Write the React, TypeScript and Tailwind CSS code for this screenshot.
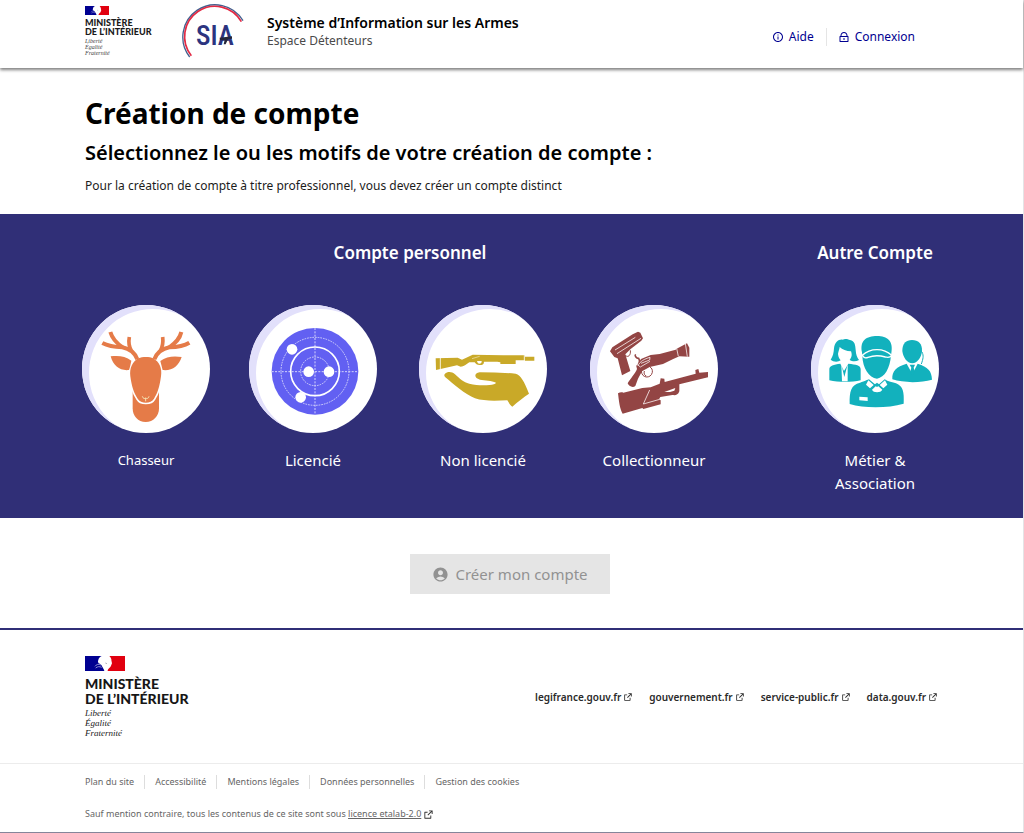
import { useState, type ReactNode } from "react";
import { RiExternalLinkLine, RiInformationLine, RiLockLine } from "react-icons/ri";
import { MdAccountCircle } from "react-icons/md";

function Flag({ className }: { className: string }) {
  return (
    <svg viewBox="0 0 120 45" className={className} aria-hidden="true">
      <rect width="120" height="45" fill="#fff" />
      <path d="M0 0H50C44 3 41 7 40 12C38 16 39 19 41 22C46 24 50 27 51 31C54 36 57 41 58 45H0Z" fill="#000091" />
      <path d="M73 0H120V45H68C67 41 72 37 76 33C79 29 79 26 81 22C80 17 79 14 79 10C78 6 76 3 73 0Z" fill="#e1000f" />
      <path d="M30 31C34 25 41 23 48 27M32 36C38 31 44 31 50 34" fill="none" stroke="#a9a9dc" strokeWidth="2.5" />
      <path d="M61 21L66 23" stroke="#8c8c9c" strokeWidth="2" />
    </svg>
  );
}

function SiaLogo() {
  return (
    <svg viewBox="330 6 195 168" className="h-[56px] w-[65px]" role="img" aria-label="SIA">
      <path d="M519 62A97 97 0 1 0 359 171" fill="none" stroke="#43608f" strokeWidth="4" />
      <path d="M514 65A91 91 0 1 0 364 167" fill="none" stroke="#e32a44" strokeWidth="5" />
      <text x="378" y="135" fontSize="82" fontWeight="500" fill="#2c3480" fontFamily="'Roboto Condensed', Roboto, sans-serif">
        SIA
      </text>
      <path d="M449 113L486 109V116L474 118L467 133H461L464 120L450 121Z" fill="#25263a" />
    </svg>
  );
}

function DeerIcon() {
  return (
    <svg viewBox="36 30 384 384" className="size-full" aria-hidden="true">
      <path d="M188 288H267V340C267 364 250 381 227 381C204 381 188 364 188 340Z" fill="#e57b48" />
      <path d="M206 190C216 185 240 185 249 190C268 200 277 220 273 244C269 276 262 296 252 311C243 327 212 327 203 311C192 295 185 275 181 244C178 220 187 199 206 190Z" fill="#e57b48" stroke="#fff" strokeWidth="10" paintOrder="stroke" />
      <g fill="#e57b48">
        <path d="M122 184C145 181 166 183 184 197C182 207 180 217 177 225C150 228 130 213 122 184Z" />
        <path d="M335 186C312 182 289 184 271 198C273 207 276 217 278 225C307 228 326 213 335 186Z" />
      </g>
      <g fill="none" stroke="#e57b48" strokeWidth="12">
        <path d="M202 193C193 170 178 161 157 157C130 156 112 152 97 144" />
        <path d="M158 157C137 143 127 132 121 111" />
        <path d="M184 167C176 153 175 142 178 126" strokeWidth="11" />
        <path d="M253 193C262 170 277 161 298 157C325 156 343 152 358 143" />
        <path d="M298 157C318 143 329 132 334 111" />
        <path d="M271 167C279 153 280 142 278 126" strokeWidth="11" />
      </g>
      <path d="M217 304C219 311 224 312 227 309C231 312 236 310 237 304M227 309V319" fill="none" stroke="#f6e3b4" strokeWidth="3" />
    </svg>
  );
}

function TargetIcon() {
  return (
    <svg viewBox="27 30 384 384" className="size-full" aria-hidden="true">
      <circle cx="225" cy="229" r="130" fill="#6260f2" />
      <g fill="none" stroke="#d3d3fb" strokeWidth="3">
        <circle cx="225" cy="229" r="102" strokeDasharray="5 3" />
        <circle cx="225" cy="229" r="43" strokeDasharray="5 3" />
        <path d="M225 99V359M95 230H355" strokeDasharray="6 4" />
      </g>
      <circle cx="225" cy="229" r="73" fill="none" stroke="#fff" strokeWidth="5" />
      <g fill="#fff">
        <circle cx="156" cy="163" r="16" />
        <circle cx="206" cy="230" r="16" />
        <circle cx="267" cy="230" r="16" />
        <circle cx="182" cy="307" r="16" />
      </g>
    </svg>
  );
}

function HandIcon() {
  return (
    <svg viewBox="27 30 384 384" className="size-full" aria-hidden="true">
      <g fill="#c9a928">
        <path d="M77 190L143 188L156 194L188 179L280 181H345V185H373V197H344V196H317V207H271V202L262 200H222C222 208 217 210 209 210C201 210 197 207 194 202L178 202C169 208 161 215 152 215L141 211L78 225Z" />
        <path d="M105 236C112 229 126 229 135 238C151 252 160 262 178 266C199 271 219 272 239 270C249 269 256 267 258 263C245 256 225 257 210 254C192 250 191 234 209 232C245 232 280 233 317 236C333 241 342 258 357 296C341 307 324 319 307 335C301 331 296 323 292 316C258 317 221 319 195 310C166 299 129 266 106 247C102 243 102 239 105 236Z" />
      </g>
      <path d="M91 188V224M343 180V198" stroke="#fff" strokeWidth="2.5" />
      <path d="M186 191L209 184" stroke="#f1e6b8" strokeWidth="2" />
      <path d="M201 198H215C215 205 212 206 208 206C204 206 202 203 201 198Z" fill="#fff" />
    </svg>
  );
}

function GunsIcon() {
  return (
    <svg viewBox="30 30 384 384" className="size-full" aria-hidden="true">
      <g fill="#934544">
        <path d="M90 169L97 157L158 118L174 110L181 113L189 130L184 137L151 163L136 178L151 228L126 241L113 190L103 186Z" />
        <path d="M169 214L183 192L212 180L239 177L287 164L290 161L321 145L328 158V185L298 184L278 193L249 207L209 216L186 229L174 251L166 273C158 280 145 273 143 265C151 251 166 235 171 222Z" />
        <path d="M114 295C120 291 126 291 130 293L187 279L212 277L239 266L242 250L253 251L254 261L347 236L346 225L355 222L358 233L384 231V247L298 268L298 289C294 301 286 301 277 300L241 306L237 313L242 316V328L190 342L187 339L128 356C119 342 117 319 114 295Z" />
      </g>
      <g fill="none" stroke="#934544" strokeWidth="4">
        <path d="M184 227C184 251 213 252 217 232C218 224 215 219 210 216" strokeWidth="3" />
        <path d="M193 228C191 237 193 240 199 243" strokeWidth="3" />
        <path d="M168 180C162 179 169 191 176 190C183 202 176 208 171 214" strokeWidth="5" />
        <path d="M136 181C144 189 153 181 151 166" strokeWidth="3" />
      </g>
      <g fill="none" stroke="#f6ecec" strokeWidth="2.5">
        <path d="M105 165L166 127M111 176L183 130" />
        <path d="M174 212C180 199 193 192 210 187L209 195L183 205M170 207L181 216L210 199" />
        <path d="M290 160L295 184M316 145L322 185" />
        <path d="M209 285L190 327L239 313" />
      </g>
      <path d="M253 291L286 279L283 287L270 291Z" fill="#fff" />
    </svg>
  );
}

function PeopleIcon() {
  return (
    <svg viewBox="33 30 384 384" className="size-full" aria-hidden="true">
      <g fill="#12b1bd">
        <path d="M92 194C99 184 101 174 102 160C104 142 116 132 128 134C135 130 144 133 150 135C164 138 166 149 167 165C168 179 171 188 177 195C167 201 156 199 149 195C158 184 155 175 153 169C139 168 127 164 119 156C118 164 115 170 114 177C115 188 119 192 122 196C114 202 99 201 92 194Z" />
        <path d="M88 256V223C88 211 101 209 121 206L132 228L145 206C168 209 182 210 182 223V256C155 262 116 262 88 256Z" />
        <path d="M307 168C307 145 318 135 336 135C355 135 367 145 366 169C364 188 352 204 337 205C321 204 309 187 307 168Z" />
        <path d="M277 253C276 226 289 216 320 206L337 237L353 206C384 216 395 227 396 254C362 264 310 264 277 253Z" />
        <path d="M329 209H345L341 218L345 232L337 241L330 232L334 218Z" />
        <path d="M186 172C179 137 199 123 231 123C262 123 281 137 274 175L273 181C270 220 254 248 231 251C207 247 188 220 187 182Z" />
        <path d="M149 327C148 289 153 269 180 263C195 259 203 254 207 253L231 273L254 253C263 260 279 262 288 265C309 273 313 291 311 326C263 340 193 340 149 327Z" />
      </g>
      <path d="M124 208L133 246L143 208L143 259H126Z" fill="#fff" />
      <path d="M187 181C211 158 251 158 275 181C269 190 263 187 256 186C239 181 220 181 204 187C197 190 190 188 187 181Z" fill="#12b1bd" stroke="#fff" strokeWidth="4" />
      <path d="M205 256L198 269L210 280L221 270ZM255 256L262 269L250 280L239 270ZM231 270L216 284C219 294 243 294 247 284Z" fill="#fff" />
      <path d="M222 270L231 263L240 270L231 276Z" fill="#12b1bd" />
      <path d="M178 305L203 307V318L178 316Z" fill="#fff" />
      <path d="M366 171C372 183 369 192 364 207" fill="none" stroke="#12b1bd" strokeWidth="3" />
    </svg>
  );
}

function AccountChoice({ label, className, children }: { label: string; className: string; children: ReactNode }) {
  const [selected, setSelected] = useState(false);
  return (
    <button
      type="button"
      aria-pressed={selected}
      onClick={() => setSelected(!selected)}
      className={`flex w-[128px] cursor-pointer flex-col items-center gap-[16px] text-white ${className}`}
    >
      <span className="block size-[128px] rounded-full bg-white shadow-[inset_7px_4px_0_#e2e0fb]">{children}</span>
      <span className="px-2 text-center leading-[23px]">{label}</span>
    </button>
  );
}

const siteLinks = ["legifrance.gouv.fr", "gouvernement.fr", "service-public.fr", "data.gouv.fr"];
const legalLinks = ["Plan du site", "Accessibilité", "Mentions légales", "Données personnelles", "Gestion des cookies"];

export default function App() {
  return (
    <div className="border-r border-b border-r-[#e4e4e6] border-b-[#85859a] bg-white font-['Noto_Sans','Open_Sans',sans-serif] text-black">
      <header className="relative flex h-[68px] items-start pr-[108px] pl-[85px] shadow-[0_2px_3px_rgba(0,0,0,0.5)]">
        <div className="w-[95px] pt-[6px]">
          <Flag className="h-[9px] w-[24px]" />
          <div className="mt-[3px] font-['Lato',sans-serif] text-[9px] leading-[9px] font-black whitespace-nowrap text-[#1a1a1a]">
            <p>MINISTÈRE</p>
            <p>DE L’INTÉRIEUR</p>
          </div>
          <p className="mt-[2px] font-['Liberation_Serif',serif] text-[6px] leading-[6px] text-[#444] italic">
            Liberté
            <br />
            Égalité
            <br />
            Fraternité
          </p>
        </div>
        <div className="pt-[2px]">
          <SiaLogo />
        </div>
        <div className="pt-[14px] pl-[22px]">
          <p className="text-[14px] leading-[18px] font-semibold">Système d’Information sur les Armes</p>
          <p className="text-[12px] leading-[18px] text-[#4a4a4a]">Espace Détenteurs</p>
        </div>
        <nav className="ml-auto flex items-center pt-[28px] text-[12px] leading-[18px] text-[#000091]">
          <a href="#aide" className="flex items-center gap-[5px] border-r border-[#e5e5e5] pr-[12px]">
            <RiInformationLine className="size-[12px]" />
            Aide
          </a>
          <a href="#connexion" className="flex items-center gap-[5px] pl-[11px]">
            <RiLockLine className="size-[12px]" />
            Connexion
          </a>
        </nav>
      </header>

      <main>
        <div className="px-[85px] pt-[27px] pb-[19px]">
          <h1 className="text-[28px] leading-[36px] font-bold">Création de compte</h1>
          <h2 className="mt-[8px] text-[20px] leading-[28px] font-semibold">
            Sélectionnez le ou les motifs de votre création de compte :
          </h2>
          <p className="mt-[10px] text-[12px] leading-[18px] text-[#1c1c1c]">
            Pour la création de compte à titre professionnel, vous devez créer un compte distinct
          </p>
        </div>

        <div className="flex justify-between bg-[#302f77] pt-[27px] pr-[84px] pb-[23px] pl-[82px] text-white">
          <section className="w-[656px]">
            <h3 className="text-center text-[17px] leading-[24px] font-semibold">Compte personnel</h3>
            <div className="mt-[40px] grid grid-cols-[167px_170px_171px_128px]">
              <AccountChoice label="Chasseur" className="text-[13px]">
                <DeerIcon />
              </AccountChoice>
              <AccountChoice label="Licencié" className="text-[15px]">
                <TargetIcon />
              </AccountChoice>
              <AccountChoice label="Non licencié" className="text-[15px]">
                <HandIcon />
              </AccountChoice>
              <AccountChoice label="Collectionneur" className="text-[15px]">
                <GunsIcon />
              </AccountChoice>
            </div>
          </section>
          <section className="w-[128px]">
            <h3 className="text-center text-[17px] leading-[24px] font-semibold whitespace-nowrap">Autre Compte</h3>
            <div className="mt-[40px]">
              <AccountChoice label="Métier & Association" className="text-[15px]">
                <PeopleIcon />
              </AccountChoice>
            </div>
          </section>
        </div>

        <div className="flex justify-center pt-[36px] pr-[3px] pb-[34px]">
          <button
            type="button"
            disabled
            className="flex h-[40px] w-[200px] items-center justify-center gap-[6px] bg-[#e5e5e5] text-[15px] text-[#929292]"
          >
            <MdAccountCircle className="size-[17px]" />
            Créer mon compte
          </button>
        </div>
      </main>

      <footer className="border-t-2 border-[#302f77]">
        <div className="flex items-center justify-between pt-[26px] pr-[85px] pb-[25px] pl-[85px]">
          <div>
            <Flag className="h-[15px] w-[40px]" />
            <div className="mt-[5px] font-['Lato',sans-serif] text-[14px] leading-[15px] font-black text-[#161616]">
              <p>MINISTÈRE</p>
              <p>DE L’INTÉRIEUR</p>
            </div>
            <p className="mt-[2px] font-['Liberation_Serif',serif] text-[9px] leading-[10px] text-[#222] italic">
              Liberté
              <br />
              Égalité
              <br />
              Fraternité
            </p>
          </div>
          <nav aria-label="Sites publics" className="flex gap-[16px] text-[10px] leading-[14px] font-semibold text-[#2a2a2a]">
            {siteLinks.map((site) => (
              <a key={site} href={`https://${site}`} className="flex items-center gap-[2px]">
                {site}
                <RiExternalLinkLine className="size-[10px]" />
              </a>
            ))}
          </nav>
        </div>
        <div className="border-t border-[#ececec] px-[85px] pt-[11px] pb-[11px] text-[9px] leading-[14px] text-[#666]">
          <ul className="flex">
            {legalLinks.map((link) => (
              <li key={link} className="mr-[10px] border-r border-[#ddd] pr-[10px] last:border-0">
                <a href="#mentions">{link}</a>
              </li>
            ))}
          </ul>
          <p className="mt-[18px] flex items-center gap-[2px]">
            <span>
              Sauf mention contraire, tous les contenus de ce site sont sous{" "}
              <a href="#licence" className="underline">
                licence etalab-2.0
              </a>
            </span>
            <RiExternalLinkLine className="size-[11px] text-[#333]" />
          </p>
        </div>
      </footer>
    </div>
  );
}
